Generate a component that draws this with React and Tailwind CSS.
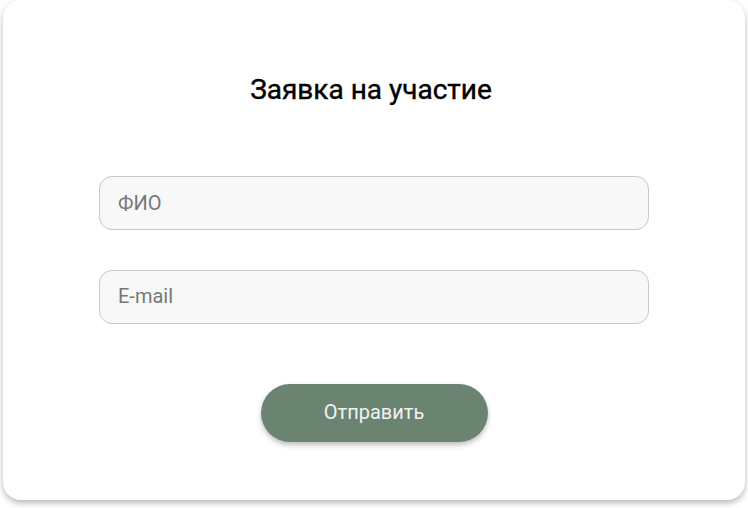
export default function App() {
  return (
    <div className="w-[748px] h-[508px] bg-white px-[3px] font-['Roboto',sans-serif]">
      <div className="h-[500px] bg-white rounded-[18px] shadow-[0_3px_6px_rgba(0,0,0,0.28)] flex flex-col items-center pt-[71px]">
        <h1 className="text-[28px] leading-[38px] font-normal text-black -ml-[6px] [-webkit-text-stroke:0.4px_black]">Заявка на участие</h1>

        <form className="flex flex-col items-center mt-[67px]" onSubmit={(e) => e.preventDefault()}>
          <input
            type="text"
            placeholder="ФИО"
            className="w-[550px] h-[54px] px-[18px] pb-[1px] rounded-[13px] border border-[#c8c8c8] bg-[#f8f8f8] text-[20px] text-[#333] placeholder:text-[#777] outline-none"
          />
          <input
            type="email"
            placeholder="E-mail"
            className="w-[550px] h-[54px] mt-[40px] px-[18px] pb-[3px] rounded-[13px] border border-[#c8c8c8] bg-[#f8f8f8] text-[20px] text-[#333] placeholder:text-[#777] outline-none"
          />
          <button
            type="submit"
            className="mt-[60px] w-[227px] h-[58px] pb-[2px] rounded-full bg-[#6b8471] text-[#f2f2f2] text-[20px] shadow-[0_3px_5px_rgba(0,0,0,0.25)]"
          >
            Отправить
          </button>
        </form>
      </div>
    </div>
  )
}
